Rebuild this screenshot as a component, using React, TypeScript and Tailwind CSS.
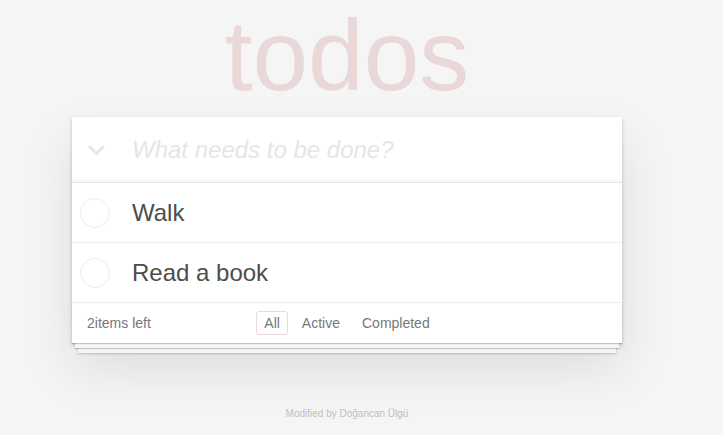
import React from 'react';

const todos = [
  { id: 1, title: 'Walk', done: false },
  { id: 2, title: 'Read a book', done: false },
];

const filters = ['All', 'Active', 'Completed'];

const App: React.FC = () => {
  const left = todos.filter(t => !t.done).length;

  return (
    <div className="min-h-[435px] bg-[#f5f5f5] font-['Liberation_Sans',Arial,sans-serif] text-[#4d4d4d] pt-[5px]">
      <div className="ml-[72px] w-[550px]">
        {/* Title */}
        <h1 className="h-[100px] text-center text-[100px] leading-[100px] font-thin text-[rgba(175,47,47,0.15)]">
          todos
        </h1>

        {/* Card */}
        <section className="mt-[12px] bg-white shadow-[0_2px_4px_0_rgba(0,0,0,0.2),0_25px_50px_0_rgba(0,0,0,0.1)]">
          <header className="flex items-center h-[65px] shadow-[inset_0_-2px_1px_rgba(0,0,0,0.03)]">
            <div className="w-[60px] pl-[15px]">
              <svg width="19" height="12" viewBox="0 0 19 12" fill="none">
                <polyline points="2,2 9.5,9.5 17,2" stroke="#e6e6e6" strokeWidth="3" />
              </svg>
            </div>
            <input
              type="text"
              placeholder="What needs to be done?"
              className="flex-1 h-full pr-4 text-[24px] italic font-light bg-transparent outline-none placeholder:text-[#e6e6e6]"
            />
          </header>

          <ul className="border-t border-[#e6e6e6]">
            {todos.map(t => (
              <li key={t.id} className="flex items-center h-[60px] border-b border-[#ededed]">
                <div className="w-[60px] pl-[8px]">
                  <div className="w-[30px] h-[30px] rounded-full border border-[#ededed]" />
                </div>
                <span className="text-[24px] leading-[29px]">{t.title}</span>
              </li>
            ))}
          </ul>

          <footer className="grid grid-cols-[1fr_auto_1fr] items-center h-[40px] px-[15px] text-[14px] text-[#777] shadow-[0_1px_1px_rgba(0,0,0,0.2),0_8px_0_-3px_#f6f6f6,0_9px_1px_-3px_rgba(0,0,0,0.2),0_16px_0_-6px_#f6f6f6,0_17px_2px_-6px_rgba(0,0,0,0.2)]">
            <span>{left}items left</span>
            <ul className="flex">
              {filters.map((f, i) => (
                <li key={f}>
                  <a
                    className={`block mx-[3px] px-[7px] py-[3px] leading-[16px] rounded-[3px] border ${
                      i === 0 ? 'border-[rgba(175,47,47,0.2)]' : 'border-transparent'
                    }`}
                  >
                    {f}
                  </a>
                </li>
              ))}
            </ul>
            <span />
          </footer>
        </section>

        <p className="mt-[63px] text-center text-[10px] text-[#bfbfbf]">Modified by Doğancan Ülgü</p>
      </div>
    </div>
  );
};

export default App;
